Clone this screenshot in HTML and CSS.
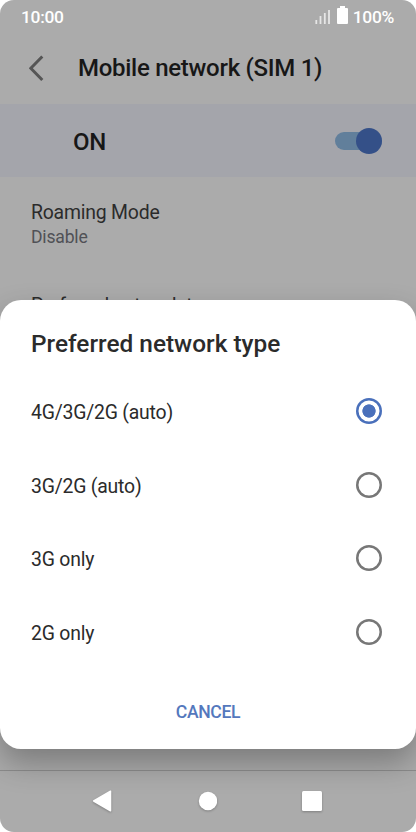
FILE: index.html
```html
<!DOCTYPE html>
<html lang="en">
<head>
<meta charset="utf-8">
<title>Mobile network (SIM 1)</title>
<link rel="stylesheet" href="styles.css">
</head>
<body>
<div class="phone">
  <div class="status">
    <span class="clock">10:00</span>
    <svg class="signal" width="16" height="16" viewBox="0 0 16 16"><path d="M1.3 11v4M5.5 7v8M9.8 4v11M14 1v14"/></svg>
    <svg class="battery" width="11" height="18" viewBox="0 0 11 18"><path d="M3 0h5v2h2q1 0 1 1v14q0 1-1 1H1q-1 0-1-1V3q0-1 1-1h2z"/></svg>
    <span class="percent">100%</span>
  </div>
  <header class="header">
    <svg class="back" width="16" height="27" viewBox="0 0 16 27"><path d="M13.3 1.5L1.8 13.2L13.3 25"/></svg>
    <h1 class="title">Mobile network (SIM 1)</h1>
  </header>
  <div class="master">
    <span class="master-label">ON</span>
    <span class="switch"><span class="knob"></span></span>
  </div>
  <main class="settings">
    <div class="setting">
      <div class="name">Roaming Mode</div>
      <div class="value">Disable</div>
    </div>
    <div class="setting">
      <div class="name">Preferred network type</div>
    </div>
  </main>
  <nav class="navbar">
    <svg width="20" height="22" viewBox="0 0 20 22"><path d="M18.5 1.2V20.8L1.7 11z" stroke-width="1.5" stroke="#fff" stroke-linejoin="round"/></svg>
    <svg width="20" height="22" viewBox="0 0 20 22"><circle cx="11" cy="11" r="9.2"/></svg>
    <svg width="20" height="22" viewBox="0 0 20 22"><rect y="1" width="20" height="20" rx="1.5"/></svg>
  </nav>
  <section class="dialog">
    <h2 class="dialog-title">Preferred network type</h2>
    <div class="option"><span>4G/3G/2G (auto)</span><span class="radio checked"></span></div>
    <div class="option"><span>3G/2G (auto)</span><span class="radio"></span></div>
    <div class="option"><span>3G only</span><span class="radio"></span></div>
    <div class="option"><span>2G only</span><span class="radio"></span></div>
    <div class="cancel">CANCEL</div>
  </section>
</div>
</body>
</html>
```
FILE: styles.css
```css
* { box-sizing: border-box; }
body { margin: 0; background: #fff; font-family: Roboto, sans-serif; color: #2b2b2b; }
.phone {
  position: relative;
  display: flex;
  flex-direction: column;
  width: 416px;
  height: 832px;
  overflow: hidden;
  border-radius: 14px;
  background: #ababab;
}
.status {
  display: flex;
  align-items: center;
  height: 33px;
  padding: 0 22px 0 21px;
  color: #fff;
  font-size: 17.4px;
  font-weight: 500;
  letter-spacing: -.3px;
}
.signal { margin: 0 6px 0 auto; fill: none; stroke: #e6e6e6; stroke-width: 1.8; }
.battery { margin: -3px 5px 0 0; fill: #fff; }
.header { display: flex; align-items: center; height: 71px; padding: 0 29px 1px; }
.back { fill: none; stroke: #555; stroke-width: 3; }
.title { margin: 0 0 0 33px; font-size: 24px; letter-spacing: -.28px; font-weight: 500; color: #171717; white-space: nowrap; }
.master {
  display: flex;
  align-items: center;
  justify-content: space-between;
  height: 73px;
  padding: 0 34px 0 73px;
  background: #a4a5ab;
}
.master-label { padding-top: 2px; font-size: 24px; letter-spacing: -.3px; font-weight: 500; color: #171717; }
.switch {
  display: flex;
  align-items: center;
  justify-content: flex-end;
  width: 47px;
  height: 18px;
  border-radius: 9px;
  background: #617f9b;
}
.knob { flex: none; width: 26px; height: 26px; border-radius: 50%; background: #345088; }
.settings { flex: 1; min-height: 0; padding: 24px 31px 0; border-bottom: 1px solid #8c8c8c; }
.setting { height: 93px; }
.name { font-size: 19.4px; letter-spacing: -.2px; line-height: 24px; }
.value { font-size: 17.6px; letter-spacing: -.2px; line-height: 24px; color: #505156; }
.navbar {
  display: flex;
  align-items: center;
  justify-content: space-between;
  height: 61px;
  padding: 0 94px 1px 92px;
  fill: #fff;
}
.navbar svg { filter: drop-shadow(0 1px 1px rgba(0, 0, 0, .25)); }
.dialog {
  position: absolute;
  top: 300px;
  left: 0;
  width: 416px;
  height: 449px;
  padding: 26px 34px 0 31px;
  border-radius: 21px;
  background: #fff;
  box-shadow: 0 14px 30px rgba(0, 0, 0, .28);
}
.dialog-title { margin: 0 0 12.3px; font-size: 24.4px; line-height: 36px; font-weight: 500; white-space: nowrap; }
.option { display: flex; align-items: center; justify-content: space-between; height: 73.6px; font-size: 19.4px; letter-spacing: -.2px; }
.option span:first-child { padding-top: 3px; }
.radio { width: 26px; height: 26px; box-shadow: inset 0 0 0 2.5px #777; border-radius: 50%; }
.radio.checked { box-shadow: inset 0 0 0 2.5px #4a70bb; background: radial-gradient(circle, #4a70bb 6.3px, transparent 7px); }
.cancel { margin: 31px 0 0 3px; text-align: center; font-size: 17.6px; letter-spacing: -.35px; line-height: 24px; font-weight: 500; color: #5478bd; }
```
